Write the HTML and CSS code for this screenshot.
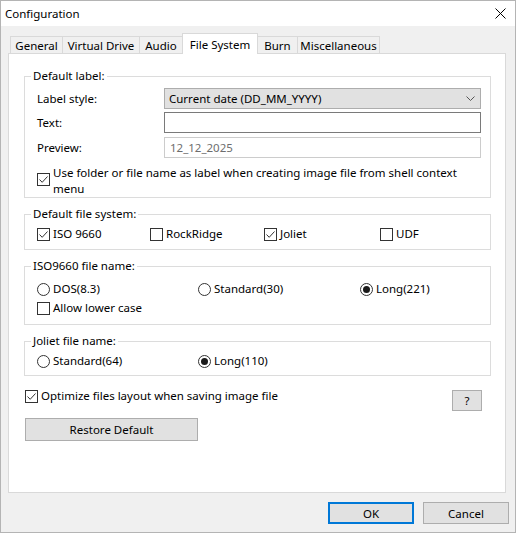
FILE: index.html
```html
<!DOCTYPE html>
<html>
<head>
<meta charset="utf-8">
<title>Configuration</title>
<link rel="stylesheet" href="styles.css">
</head>
<body>
<div class="window">
  <div class="titlebar">
    <span class="title">Configuration</span>
    <svg class="close" width="11" height="11" viewBox="0 0 11 11"><path d="M0.5 0.5 L10.5 10.5 M10.5 0.5 L0.5 10.5" stroke="#000" stroke-width="1" fill="none"/></svg>
  </div>
  <div class="tabs">
    <div class="tab t1">General</div>
    <div class="tab t2">Virtual Drive</div>
    <div class="tab t3">Audio</div>
    <div class="tab t4 active">File System</div>
    <div class="tab t5">Burn</div>
    <div class="tab t6">Miscellaneous</div>
  </div>
  <div class="panel">
    <fieldset class="group g1">
      <legend>Default label:</legend>
      <div class="gbody b1">
        <div class="form">
          <div class="lbl">Label style:</div>
          <div class="combo"><span>Current date (DD_MM_YYYY)</span><svg class="chev" width="9" height="5" viewBox="0 0 9 5"><path d="M0.5 0.5 L4.5 4.5 L8.5 0.5" stroke="#555" stroke-width="1" fill="none"/></svg></div>
          <div class="lbl">Text:</div>
          <div class="input"></div>
          <div class="lbl">Preview:</div>
          <div class="input disabled">12_12_2025</div>
        </div>
        <div class="check multi">
          <span class="box"><svg width="11" height="11" viewBox="0 0 11 11"><path d="M1.5 5.5 L4.2 8.3 L9.5 2.5" stroke="#333" stroke-width="1" fill="none"/></svg></span>
          <span class="txt">Use folder or file name as label when creating image file from shell context<br>menu</span>
        </div>
      </div>
    </fieldset>

    <fieldset class="group g2">
      <legend>Default file system:</legend>
      <div class="gbody b2 row4">
        <div class="check"><span class="box"><svg width="11" height="11" viewBox="0 0 11 11"><path d="M1.5 5.5 L4.2 8.3 L9.5 2.5" stroke="#333" stroke-width="1" fill="none"/></svg></span><span>ISO 9660</span></div>
        <div class="check"><span class="box"></span><span>RockRidge</span></div>
        <div class="check"><span class="box"><svg width="11" height="11" viewBox="0 0 11 11"><path d="M1.5 5.5 L4.2 8.3 L9.5 2.5" stroke="#333" stroke-width="1" fill="none"/></svg></span><span>Joliet</span></div>
        <div class="check"><span class="box"></span><span>UDF</span></div>
      </div>
    </fieldset>

    <fieldset class="group g3">
      <legend>ISO9660 file name:</legend>
      <div class="gbody b3">
        <div class="row3">
          <div class="check"><span class="radio"></span><span>DOS(8.3)</span></div>
          <div class="check"><span class="radio"></span><span>Standard(30)</span></div>
          <div class="check"><span class="radio on"></span><span>Long(221)</span></div>
        </div>
        <div class="check lower"><span class="box"></span><span>Allow lower case</span></div>
      </div>
    </fieldset>

    <fieldset class="group g4">
      <legend>Joliet file name:</legend>
      <div class="gbody b4">
        <div class="row3">
          <div class="check"><span class="radio"></span><span>Standard(64)</span></div>
          <div class="check"><span class="radio on"></span><span>Long(110)</span></div>
        </div>
      </div>
    </fieldset>

    <div class="optrow">
      <div class="check opt"><span class="box"><svg width="11" height="11" viewBox="0 0 11 11"><path d="M1.5 5.5 L4.2 8.3 L9.5 2.5" stroke="#333" stroke-width="1" fill="none"/></svg></span><span>Optimize files layout when saving image file</span></div>
      <button class="btn help">?</button>
    </div>
    <button class="btn restore">Restore Default</button>
  </div>
  <div class="footer">
    <button class="btn ok">OK</button>
    <button class="btn cancel">Cancel</button>
  </div>
</div>
</body>
</html>
```

FILE: styles.css
```css
* { box-sizing: border-box; }
body {
  margin: 0;
  font-family: "Noto Sans", "Open Sans", sans-serif;
  font-size: 11.5px;
  color: #000;
  background: #fff;
}
.window {
  width: 516px;
  height: 533px;
  border: 1px solid #b4b4b4;
  background: #f0f0f0;
  display: flex;
  flex-direction: column;
}
.titlebar {
  height: 25px;
  flex: none;
  background: #fff;
  display: flex;
  align-items: center;
  justify-content: space-between;
  padding: 0 9px 0 4px;
}
.title { line-height: 16px; font-size: 11.5px; }
.close { display: block; }

.tabs {
  flex: none;
  height: 20px;
  margin-top: 7px;
  padding-left: 9px;
  display: flex;
  align-items: flex-end;
}
.tab {
  height: 17px;
  border: 1px solid #d9d9d9;
  border-bottom: none;
  margin-left: -1px;
  background: #f0f0f0;
  display: flex;
  align-items: center;
  justify-content: center;
  line-height: 15px;
  white-space: nowrap;
}
.tab:first-child { margin-left: 0; }
.t1 { width: 53px; }
.t2 { width: 78px; }
.t3 { width: 44px; }
.t4 { width: 76px; }
.t5 { width: 41px; }
.t6 { width: 83px; }
.tab.active {
  height: 21px;
  margin-bottom: -1px;
  background: #fff;
  position: relative;
  z-index: 1;
}

.panel {
  flex: none;
  width: 498px;
  height: 440px;
  margin-left: 7px;
  border: 1px solid #d9d9d9;
  background: #fff;
  padding: 0 14px 0 15px;
}

.group {
  margin: 8px 0 0;
  padding: 0;
  min-width: 0;
  width: 467px;
  border: 1px solid #dcdcdc;
}
.group.g1 { margin-top: 14px; }
.group legend {
  padding: 0 2px;
  margin-left: 6px;
  line-height: 16px;
}
.gbody { padding: 0 9px 0 12px; }
.b1 { padding-top: 4px; padding-bottom: 0; }
.b2 { padding-top: 4px; padding-bottom: 7px; }
.b3 { padding-top: 7px; padding-bottom: 8px; }
.b4 { padding-top: 4px; padding-bottom: 6px; }

.form {
  display: grid;
  grid-template-columns: 127px 317px;
  grid-template-rows: 21px 22px 21px;
  row-gap: 3px;
}
.lbl {
  display: flex;
  align-items: center;
  height: 21px;
}
.combo {
  height: 21px;
  background: #e1e1e1;
  border: 1px solid #adadad;
  display: flex;
  align-items: center;
  justify-content: space-between;
  padding: 0 5px 0 4px;
}
.chev { display: block; }
.input {
  height: 21px;
  border: 1px solid #7a7a7a;
  background: #fff;
}
.input.disabled {
  border-color: #cccccc;
  color: #6d6d6d;
  display: flex;
  align-items: center;
  padding-left: 5px;
}

.check {
  display: flex;
  align-items: center;
  height: 16px;
  line-height: 16px;
  white-space: nowrap;
}
.box {
  flex: none;
  width: 13px;
  height: 13px;
  border: 1px solid #333;
  background: #fff;
  margin-right: 3px;
  display: flex;
  align-items: center;
  justify-content: center;
}
.box svg { display: block; }
.radio {
  flex: none;
  width: 13px;
  height: 13px;
  border: 1px solid #333;
  border-radius: 50%;
  background: #fff;
  margin-right: 3px;
  display: flex;
  align-items: center;
  justify-content: center;
}
.radio.on::after {
  content: "";
  width: 7px;
  height: 7px;
  border-radius: 50%;
  background: #1a1a1a;
}

.check.multi {
  height: auto;
  align-items: flex-start;
  margin-top: 7px;
  line-height: 16px;
}
.check.multi .box { margin-top: 8px; }

.row4 {
  display: grid;
  grid-template-columns: 113px 114px 116px auto;
}
.row3 {
  display: grid;
  grid-template-columns: 161px 162px auto;
}
.check.lower { margin-top: 3px; }

.optrow {
  margin-top: 12px;
  display: flex;
  justify-content: space-between;
  align-items: flex-start;
  padding-left: 1px;
  padding-right: 9px;
}

.btn {
  font: inherit;
  color: #000;
  background: #e1e1e1;
  border: 1px solid #adadad;
  padding: 0;
  margin: 0;
  display: flex;
  align-items: center;
  justify-content: center;
}
.help {
  width: 30px;
  height: 21px;
  margin-top: 2px;
}
.restore {
  width: 173px;
  height: 23px;
  margin-top: 7px;
  margin-left: 1px;
}
.footer {
  flex: none;
  margin-top: 9px;
  display: flex;
  justify-content: flex-end;
  gap: 9px;
  padding-right: 6px;
}
.footer .btn {
  width: 86px;
  height: 22px;
}
.ok { border: 2px solid #0078d7; }
```
